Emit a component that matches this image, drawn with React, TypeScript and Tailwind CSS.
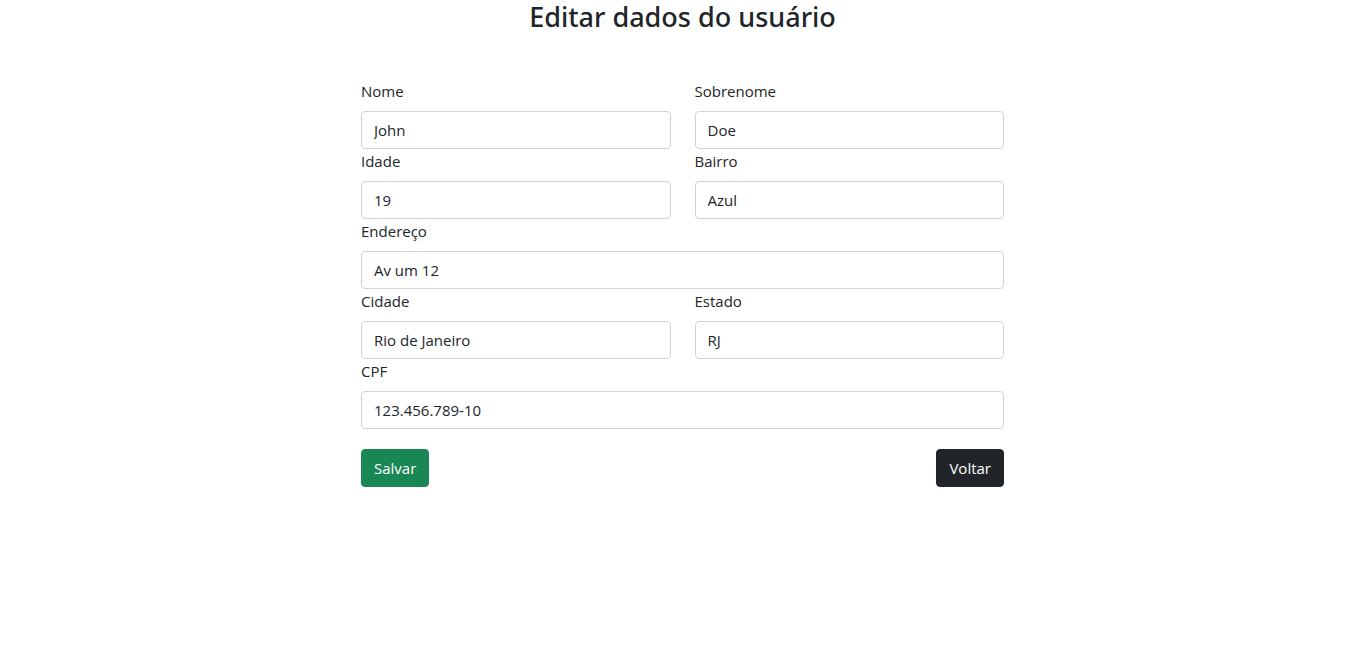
import React from "react";

type FieldProps = {
  id: string;
  label: string;
  value: string;
  wide?: boolean;
};

function Field({ id, label, value, wide = false }: FieldProps) {
  return (
    <div className={wide ? "col-span-2" : "col-span-1"}>
      <label htmlFor={id} className="mb-2 block leading-6">
        {label}
      </label>
      <input
        id={id}
        name={id}
        type="text"
        defaultValue={value}
        className="block w-full rounded border border-[#ced4da] bg-white px-3 py-1.5 leading-6 text-[#212529] outline-none focus:border-[#86b7fe]"
      />
    </div>
  );
}

export default function App() {
  return (
    <main className="bg-white font-['Open_Sans','Noto_Sans',sans-serif] text-[15px] text-[#212529]">
      <h1 className="text-center font-['Noto_Sans','Open_Sans',sans-serif] text-[27px] leading-[34px] font-medium">
        Editar dados do usuário
      </h1>
      <form
        className="mx-auto mt-[45px] w-full max-w-[659px] px-2"
        onSubmit={(event) => event.preventDefault()}
      >
        <div className="grid grid-cols-2 gap-x-6">
          <Field id="nome" label="Nome" value="John" />
          <Field id="sobrenome" label="Sobrenome" value="Doe" />
          <Field id="idade" label="Idade" value="19" />
          <Field id="bairro" label="Bairro" value="Azul" />
          <Field id="endereco" label="Endereço" value="Av um 12" wide />
          <Field id="cidade" label="Cidade" value="Rio de Janeiro" />
          <Field id="estado" label="Estado" value="RJ" />
          <Field id="cpf" label="CPF" value="123.456.789-10" wide />
        </div>
        <div className="mt-5 flex justify-between">
          <button
            type="submit"
            className="rounded border border-[#198754] bg-[#198754] px-3 py-1.5 leading-6 text-white"
          >
            Salvar
          </button>
          <button
            type="button"
            className="rounded border border-[#212529] bg-[#212529] px-3 py-1.5 leading-6 text-white"
          >
            Voltar
          </button>
        </div>
      </form>
    </main>
  );
}
